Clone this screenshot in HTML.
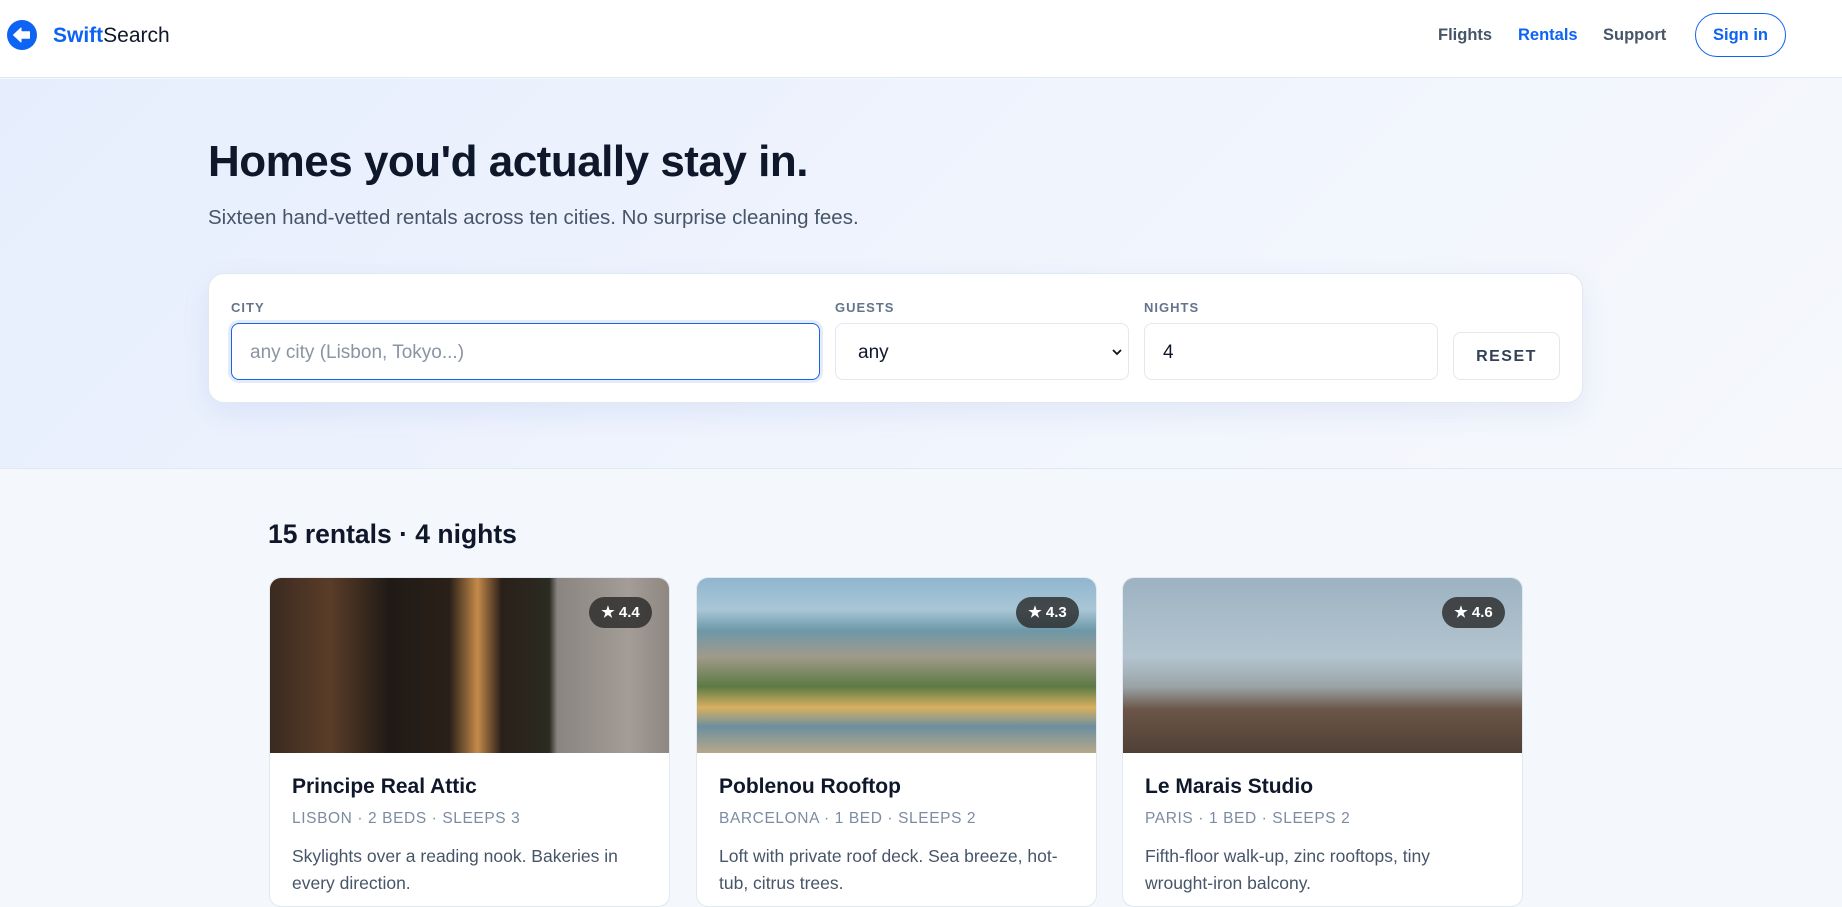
<!DOCTYPE html>
<html><head><meta charset="utf-8"><style>
*{box-sizing:border-box;margin:0;padding:0}
body{width:1842px;height:897px;overflow:hidden;font-family:"Liberation Sans",sans-serif;background:#f4f7fc;color:#0f172a;position:relative}
.hdr{position:absolute;left:0;top:0;width:1842px;height:78px;background:#fff;border-bottom:1px solid #e2e8f0}
.logo{position:absolute;left:7px;top:20px;width:30px;height:30px}
.brand{position:absolute;left:53px;top:24px;font-size:21px;color:#0f172a}
.brand b{color:#0d63f3}
.nav a{position:absolute;top:26px;font-size:16.5px;font-weight:bold;color:#475569;text-decoration:none}
.signin{position:absolute;left:1695px;top:13px;width:91px;height:44px;border:1.5px solid #0d63f3;border-radius:22px;color:#0d63f3;font-size:16.5px;font-weight:bold;display:flex;align-items:center;justify-content:center}
.hero{position:absolute;left:0;top:79px;width:1842px;height:390px;background:linear-gradient(135deg,#e6eefd 0%,#f1f5fd 60%,#f6f8fc 100%);border-bottom:1px solid #e2e8f0}
h1{position:absolute;left:208px;top:137px;font-size:44px;font-weight:bold;color:#0f172a;letter-spacing:-0.5px}
.sub{position:absolute;left:208px;top:206px;font-size:20.5px;color:#475569}
.card{position:absolute;left:208px;top:273px;width:1375px;height:130px;background:#fff;border:1px solid #e2e8f0;border-radius:16px;box-shadow:0 10px 30px rgba(30,64,175,.08)}
.lbl{position:absolute;top:300px;font-size:13px;font-weight:bold;color:#64748b;letter-spacing:1px}
.inp{position:absolute;top:323px;height:57px;border:1px solid #e2e8f0;border-radius:8px;background:#fff;font-size:19px;padding-left:18px;line-height:57px;color:#0f172a}
.reset{position:absolute;left:1453px;top:332px;width:107px;height:48px;border:1px solid #e2e8f0;border-radius:8px;font-size:16px;font-weight:bold;letter-spacing:1.5px;color:#334155;text-align:center;line-height:48px}
h2{position:absolute;left:268px;top:519px;font-size:26.5px;font-weight:bold}
.rc{position:absolute;top:577px;width:401px;height:330px;background:#fff;border:1px solid #e2e8f0;border-radius:12px;overflow:hidden}
.img{height:175px;position:relative}
.badge{position:absolute;right:17px;top:19px;width:63px;height:31px;border-radius:16px;background:rgba(40,40,40,.8);color:#fff;font-size:15px;font-weight:bold;text-align:center;line-height:31px}
.t{position:absolute;left:22px;top:197px;font-size:21px;font-weight:bold}
.m{position:absolute;left:22px;top:232px;font-size:15.5px;color:#7c8ba1;letter-spacing:0.6px}
.d{position:absolute;left:22px;top:265px;width:345px;font-size:17.5px;line-height:27px;color:#475569}
</style></head><body>
<div class="hdr">
<svg class="logo" viewBox="0 0 30 30"><circle cx="15" cy="15" r="15" fill="#0d63f3"/><path d="M6.5 15 L14 8 L14 11.8 L22.5 11.8 L22.5 18.2 L14 18.2 L14 22 Z" fill="#fff" stroke="#fff" stroke-width="1" stroke-linejoin="round"/></svg>
<div class="brand"><b>Swift</b>Search</div>
<div class="nav"><a style="left:1438px">Flights</a><a style="left:1518px;color:#0d63f3">Rentals</a><a style="left:1603px">Support</a></div>
<div class="signin">Sign in</div>
</div>
<div class="hero"></div>
<h1>Homes you'd actually stay in.</h1>
<div class="sub">Sixteen hand-vetted rentals across ten cities. No surprise cleaning fees.</div>
<div class="card"></div>
<div class="lbl" style="left:231px">CITY</div>
<div class="lbl" style="left:835px">GUESTS</div>
<div class="lbl" style="left:1144px">NIGHTS</div>
<div class="inp" style="left:231px;width:589px;border:1.5px solid #1d63e0;box-shadow:0 0 0 3px #e3ecfd;color:#8a94a3">any city (Lisbon, Tokyo...)</div>
<div class="inp" style="left:835px;width:294px;padding-left:22px">any<svg style="position:absolute;right:6px;top:25px" width="10" height="7" viewBox="0 0 10 7"><path d="M1 1 L5 5 L9 1" fill="none" stroke="#111" stroke-width="1.8"/></svg></div>
<div class="inp" style="left:1144px;width:294px;padding-left:18px">4</div>
<div class="reset">RESET</div>
<h2>15 rentals · 4 nights</h2>
<div class="rc" style="left:269px"><div class="img" style="background:linear-gradient(90deg,#3a2a20 0%,#5a3d28 15%,#1f1a16 30%,#2a2018 45%,#c58a4a 52%,#2a201a 58%,#2b2b22 70%,#8a8580 72%,#a39c97 90%,#8f8780 100%)"><div class="badge">★ 4.4</div></div>
<div class="t">Principe Real Attic</div><div class="m">LISBON · 2 BEDS · SLEEPS 3</div><div class="d">Skylights over a reading nook. Bakeries in every direction.</div></div>
<div class="rc" style="left:696px"><div class="img" style="background:linear-gradient(180deg,#8fb6cf 0%,#a9c6d6 18%,#6d98a8 30%,#a19a8a 45%,#5d7a45 62%,#d8b060 74%,#6c8fa0 85%,#b7a88a 100%)"><div class="badge">★ 4.3</div></div>
<div class="t">Poblenou Rooftop</div><div class="m">BARCELONA · 1 BED · SLEEPS 2</div><div class="d">Loft with private roof deck. Sea breeze, hot-tub, citrus trees.</div></div>
<div class="rc" style="left:1122px"><div class="img" style="background:linear-gradient(180deg,#9db3c2 0%,#b3c4cf 45%,#9aa4a8 62%,#6b5648 75%,#4f4036 100%)"><div class="badge">★ 4.6</div></div>
<div class="t">Le Marais Studio</div><div class="m">PARIS · 1 BED · SLEEPS 2</div><div class="d">Fifth-floor walk-up, zinc rooftops, tiny wrought-iron balcony.</div></div>
</body></html>
